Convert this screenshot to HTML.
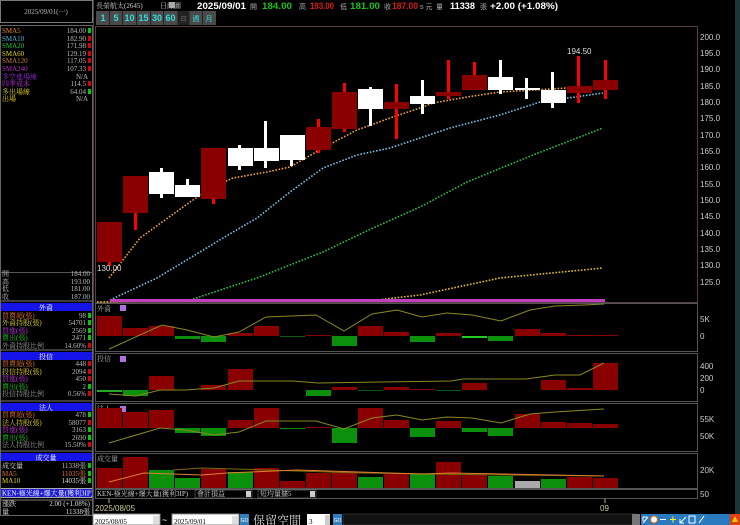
<!DOCTYPE html>
<html><head><meta charset="utf-8"><style>
html,body{margin:0;padding:0;background:#000;width:740px;height:525px;overflow:hidden}
svg{display:block}
.s{font-family:"Liberation Serif","Noto Serif CJK TC",serif;font-size:7px}
.b{font-family:"Liberation Sans","Noto Sans CJK TC",sans-serif}
</style></head><body>
<svg width="740" height="525" viewBox="0 0 740 525" xmlns="http://www.w3.org/2000/svg">
<rect width="740" height="525" fill="#000"/>
<!-- left panel -->
<rect x="0.5" y="0.5" width="92" height="22" fill="#000" stroke="#777"/>
<text x="46" y="14" class="s" fill="#bbb" text-anchor="middle" font-size="7.5">2025/09/01(一)</text>
<rect x="0.5" y="25.5" width="92" height="247" fill="none" stroke="#555"/>
<g class="s">
<text x="2" y="33" fill="#e08a2a">SMA5</text><text x="86" y="33" fill="#bbb" text-anchor="end">184.00</text><rect x="88" y="28" width="3" height="5" fill="#0c0"/>
<text x="2" y="41" fill="#4ab8d8">SMA10</text><text x="86" y="41" fill="#bbb" text-anchor="end">182.90</text><rect x="88" y="36" width="3" height="5" fill="#d00"/>
<text x="2" y="48" fill="#2cc02c">SMA20</text><text x="86" y="48" fill="#bbb" text-anchor="end">171.98</text><rect x="88" y="43" width="3" height="5" fill="#d00"/>
<text x="2" y="56" fill="#dcd020">SMA60</text><text x="86" y="56" fill="#bbb" text-anchor="end">129.19</text><rect x="88" y="51" width="3" height="5" fill="#d00"/>
<text x="2" y="63" fill="#c08040">SMA120</text><text x="86" y="63" fill="#bbb" text-anchor="end">117.05</text><rect x="88" y="58" width="3" height="5" fill="#d00"/>
<text x="2" y="71" fill="#b030c0">SMA240</text><text x="86" y="71" fill="#bbb" text-anchor="end">107.33</text><rect x="88" y="66" width="3" height="5" fill="#d00"/>
<text x="2" y="79" fill="#9030d0">多空進場線</text><text x="88" y="79" fill="#bbb" text-anchor="end">N/A</text>
<text x="2" y="86" fill="#c030e0">四季成本</text><text x="86" y="86" fill="#bbb" text-anchor="end">114.5</text><rect x="88" y="81" width="3" height="5" fill="#d00"/>
<text x="2" y="94" fill="#e0d020">多出場線</text><text x="86" y="94" fill="#bbb" text-anchor="end">64.04</text><rect x="88" y="89" width="3" height="5" fill="#0c0"/>
<text x="2" y="101" fill="#e0d020">出場</text><text x="88" y="101" fill="#bbb" text-anchor="end">N/A</text>

<text x="2" y="276" fill="#bbb">開</text><text x="90" y="276" fill="#bbb" text-anchor="end">184.00</text>
<text x="2" y="284" fill="#bbb">高</text><text x="90" y="284" fill="#bbb" text-anchor="end">193.00</text>
<text x="2" y="291" fill="#bbb">低</text><text x="90" y="291" fill="#bbb" text-anchor="end">181.00</text>
<text x="2" y="299" fill="#bbb">收</text><text x="90" y="299" fill="#bbb" text-anchor="end">187.00</text>

<rect x="1" y="303" width="91" height="8" fill="#1414e8"/><text x="46" y="310" fill="#fff" text-anchor="middle">外資</text>
<text x="2" y="318" fill="#e07030">買賣超(張)</text><text x="86" y="318" fill="#bbb" text-anchor="end">98</text><rect x="88" y="313" width="3" height="5" fill="#0c0"/>
<text x="2" y="325" fill="#e0d020">外資持股(張)</text><text x="86" y="325" fill="#bbb" text-anchor="end">54701</text><rect x="88" y="320" width="3" height="5" fill="#0c0"/>
<text x="2" y="333" fill="#c030e0">買進(張)</text><text x="86" y="333" fill="#bbb" text-anchor="end">2569</text><rect x="88" y="328" width="3" height="5" fill="#0c0"/>
<text x="2" y="340" fill="#20c020">賣出(張)</text><text x="86" y="340" fill="#bbb" text-anchor="end">2471</text><rect x="88" y="335" width="3" height="5" fill="#0c0"/>
<text x="2" y="348" fill="#999">外資持股比例</text><text x="86" y="348" fill="#bbb" text-anchor="end">14.60%</text><rect x="88" y="343" width="3" height="5" fill="#d00"/>

<rect x="1" y="352" width="91" height="8" fill="#1414e8"/><text x="46" y="359" fill="#fff" text-anchor="middle">投信</text>
<text x="2" y="366" fill="#e07030">買賣超(張)</text><text x="86" y="366" fill="#bbb" text-anchor="end">448</text><rect x="88" y="361" width="3" height="5" fill="#d00"/>
<text x="2" y="374" fill="#e0d020">投信持股(張)</text><text x="86" y="374" fill="#bbb" text-anchor="end">2094</text><rect x="88" y="369" width="3" height="5" fill="#d00"/>
<text x="2" y="381" fill="#c030e0">買進(張)</text><text x="86" y="381" fill="#bbb" text-anchor="end">450</text><rect x="88" y="376" width="3" height="5" fill="#d00"/>
<text x="2" y="389" fill="#20c020">賣出(張)</text><text x="86" y="389" fill="#bbb" text-anchor="end">2</text><rect x="88" y="384" width="3" height="5" fill="#0c0"/>
<text x="2" y="396" fill="#999">投信持股比例</text><text x="86" y="396" fill="#bbb" text-anchor="end">0.56%</text><rect x="88" y="391" width="3" height="5" fill="#d00"/>

<rect x="1" y="403" width="91" height="8" fill="#1414e8"/><text x="46" y="410" fill="#fff" text-anchor="middle">法人</text>
<text x="2" y="417" fill="#e07030">買賣超(張)</text><text x="86" y="417" fill="#bbb" text-anchor="end">478</text><rect x="88" y="412" width="3" height="5" fill="#0c0"/>
<text x="2" y="425" fill="#e0d020">法人持股(張)</text><text x="86" y="425" fill="#bbb" text-anchor="end">58077</text><rect x="88" y="420" width="3" height="5" fill="#d00"/>
<text x="2" y="432" fill="#c030e0">買進(張)</text><text x="86" y="432" fill="#bbb" text-anchor="end">3163</text><rect x="88" y="427" width="3" height="5" fill="#0c0"/>
<text x="2" y="440" fill="#20c020">賣出(張)</text><text x="86" y="440" fill="#bbb" text-anchor="end">2690</text><rect x="88" y="435" width="3" height="5" fill="#0c0"/>
<text x="2" y="447" fill="#999">法人持股比例</text><text x="86" y="447" fill="#bbb" text-anchor="end">15.50%</text><rect x="88" y="442" width="3" height="5" fill="#d00"/>

<rect x="1" y="453" width="91" height="8" fill="#1414e8"/><text x="46" y="460" fill="#fff" text-anchor="middle">成交量</text>
<text x="2" y="468" fill="#ddd">成交量</text><text x="86" y="468" fill="#bbb" text-anchor="end">11338張</text><rect x="88" y="463" width="3" height="5" fill="#0c0"/>
<text x="2" y="476" fill="#e07030">MA5</text><text x="86" y="476" fill="#e07030" text-anchor="end">11035張</text><rect x="88" y="471" width="3" height="5" fill="#0c0"/>
<text x="2" y="483" fill="#e0d020">MA10</text><text x="86" y="483" fill="#ddd" text-anchor="end">14035張</text><rect x="88" y="478" width="3" height="5" fill="#0c0"/>

<rect x="0.5" y="488.5" width="92" height="9" fill="#1a1ad0" stroke="#aaa"/>
<text x="2" y="495.5" fill="#fff">KEN-極光線+爆大量(獲利3IP)</text>
<text x="2" y="506" fill="#ddd">漲跌</text><text x="90" y="506" fill="#ddd" text-anchor="end">2.00 (+1.08%)</text>
<text x="2" y="514" fill="#ddd">量</text><text x="90" y="514" fill="#ddd" text-anchor="end">11338張</text>
</g>
<line x1="0.5" y1="301" x2="92.5" y2="301" stroke="#777"/>
<line x1="0.5" y1="350" x2="92.5" y2="350" stroke="#777"/>
<line x1="0.5" y1="401" x2="92.5" y2="401" stroke="#777"/>
<line x1="0.5" y1="451" x2="92.5" y2="451" stroke="#777"/>
<line x1="0.5" y1="500" x2="92.5" y2="500" stroke="#777"/>
<rect x="0.5" y="25.5" width="92" height="490" fill="none" stroke="#666"/>
<line x1="93.5" y1="0" x2="93.5" y2="525" stroke="#444"/>

<!-- header -->
<text x="96" y="8" class="s" fill="#ccc" font-size="7.5">長榮航太(2645)</text>
<text x="160" y="8" class="s" fill="#ccc" font-size="7.5">日線圖</text>
<rect x="169" y="2" width="6" height="6" fill="#aaa"/>
<g class="b" font-weight="bold" font-size="9.5">
<text x="197" y="9" fill="#fff" textLength="49" lengthAdjust="spacingAndGlyphs">2025/09/01</text>
<text x="250" y="9" fill="#aaa" font-size="7" font-weight="normal">開</text><text x="262" y="9" fill="#1bc01b" textLength="30" lengthAdjust="spacingAndGlyphs">184.00</text>
<text x="299" y="9" fill="#aaa" font-size="7" font-weight="normal">高</text><text x="310" y="9" fill="#e01818" textLength="24" lengthAdjust="spacingAndGlyphs">193.00</text>
<text x="340" y="9" fill="#aaa" font-size="7" font-weight="normal">低</text><text x="350" y="9" fill="#1bc01b" textLength="30" lengthAdjust="spacingAndGlyphs">181.00</text>
<text x="384" y="9" fill="#aaa" font-size="7" font-weight="normal">收</text><text x="392" y="9" fill="#e01818" textLength="26" lengthAdjust="spacingAndGlyphs">187.00</text>
<text x="420" y="9" fill="#aaa" font-size="7" font-weight="normal">s 元</text>
<text x="436" y="9" fill="#aaa" font-size="7" font-weight="normal">量</text><text x="450" y="9" fill="#fff" font-size="9" textLength="25" lengthAdjust="spacingAndGlyphs">11338</text>
<text x="480" y="9" fill="#aaa" font-size="7" font-weight="normal">張</text>
<text x="490" y="9" fill="#fff" font-size="9" textLength="68" lengthAdjust="spacingAndGlyphs">+2.00 (+1.08%)</text>
</g>
<g class="b" font-size="9" font-weight="bold" fill="#3dd">
<rect x="96" y="11" width="120" height="14" fill="#4a4a4a"/>
<rect x="177.5" y="11" width="12" height="14" fill="#222"/>
<g stroke="#222" stroke-width="1"><line x1="109.5" y1="11" x2="109.5" y2="25"/><line x1="122.5" y1="11" x2="122.5" y2="25"/><line x1="136.5" y1="11" x2="136.5" y2="25"/><line x1="150.5" y1="11" x2="150.5" y2="25"/><line x1="163.5" y1="11" x2="163.5" y2="25"/><line x1="202.5" y1="11" x2="202.5" y2="25"/></g>
<text x="103" y="21" text-anchor="middle">1</text><text x="116" y="21" text-anchor="middle">5</text><text x="129.5" y="21" text-anchor="middle">10</text><text x="143.5" y="21" text-anchor="middle">15</text><text x="157" y="21" text-anchor="middle">30</text><text x="170.5" y="21" text-anchor="middle">60</text>
<text x="183.5" y="21" text-anchor="middle" fill="#777" font-size="6" font-weight="normal">日</text>
<text x="196" y="21" text-anchor="middle" font-size="7" font-weight="normal">週</text>
<text x="209" y="21" text-anchor="middle" font-size="7" font-weight="normal">月</text>
</g>
<rect x="735" y="0" width="5" height="525" fill="#1d3535"/>

<!-- main chart -->
<rect x="95.5" y="26.5" width="602" height="276" fill="none" stroke="#5a3a44"/>
<g class="b" font-size="8" fill="#ccc">
<text x="700" y="40">200.0</text><text x="700" y="56">195.0</text><text x="700" y="72">190.0</text><text x="700" y="89">185.0</text><text x="700" y="105">180.0</text><text x="700" y="121">175.0</text><text x="700" y="138">170.0</text><text x="700" y="154">165.0</text><text x="700" y="170">160.0</text><text x="700" y="187">155.0</text><text x="700" y="203">150.0</text><text x="700" y="219">145.0</text><text x="700" y="236">140.0</text><text x="700" y="252">135.0</text><text x="700" y="268">130.0</text><text x="700" y="285">125.0</text>
</g>
<g fill="none" stroke-width="1.6" stroke-dasharray="1.6 1.6">
<polyline stroke="#e0c020" points="97,302 200,300 300,300 377,300 420,295 500,278 603,268"/>
<polyline stroke="#2cc040" points="190,300 257,278 323,252 373,228 420,207 467,182 533,155 603,128"/>
<polyline stroke="#70c0e0" points="110,300 157,278 190,258 223,238 257,218 290,192 323,168 357,155 390,148 420,138 450,128 500,115 540,102 603,93"/>
<polyline stroke="#f0a040" points="109,278 140,238 190,202 213,187 233,178 267,172 290,167 323,148 357,130 390,118 420,108 433,103 467,97 500,92 533,90 567,88 603,88"/>
</g>
<rect x="110" y="299" width="495" height="3" fill="#c040c0"/>
<g>
<rect x="108" y="222" width="3" height="44" fill="#f00"/><rect x="97" y="222" width="25" height="40" fill="#8a0000"/>
<rect x="134" y="176" width="3" height="54" fill="#f00"/><rect x="123" y="176" width="25" height="37" fill="#8a0000"/>
<rect x="160" y="168" width="3" height="30" fill="#fff"/><rect x="149" y="172" width="25" height="22" fill="#fff"/>
<rect x="186" y="179" width="3" height="18" fill="#fff"/><rect x="175" y="185" width="25" height="12" fill="#fff"/>
<rect x="212" y="148" width="3" height="56" fill="#f00"/><rect x="201" y="148" width="25" height="51" fill="#8a0000"/>
<rect x="238" y="145" width="3" height="25" fill="#fff"/><rect x="228" y="148" width="25" height="18" fill="#fff"/>
<rect x="264" y="121" width="3" height="47" fill="#fff"/><rect x="254" y="148" width="25" height="13" fill="#fff"/>
<rect x="290" y="135" width="3" height="31" fill="#fff"/><rect x="280" y="135" width="25" height="25" fill="#fff"/>
<rect x="317" y="119" width="3" height="34" fill="#f00"/><rect x="306" y="127" width="25" height="23" fill="#8a0000"/>
<rect x="343" y="83" width="3" height="49" fill="#f00"/><rect x="332" y="92" width="25" height="37" fill="#8a0000"/>
<rect x="369" y="87" width="3" height="39" fill="#fff"/><rect x="358" y="89" width="25" height="20" fill="#fff"/>
<rect x="395" y="84" width="3" height="55" fill="#f00"/><rect x="384" y="102" width="25" height="7" fill="#8a0000"/>
<rect x="421" y="80" width="3" height="34" fill="#fff"/><rect x="410" y="96" width="25" height="8" fill="#fff"/>
<rect x="447" y="60" width="3" height="39" fill="#f00"/><rect x="436" y="92" width="25" height="4" fill="#8a0000"/>
<rect x="473" y="62" width="3" height="28" fill="#f00"/><rect x="462" y="75" width="25" height="15" fill="#8a0000"/>
<rect x="499" y="60" width="3" height="34" fill="#fff"/><rect x="488" y="77" width="25" height="13" fill="#fff"/>
<rect x="525" y="78" width="3" height="21" fill="#fff"/><rect x="515" y="88" width="25" height="2" fill="#fff"/>
<rect x="551" y="72" width="3" height="36" fill="#fff"/><rect x="541" y="90" width="25" height="13" fill="#fff"/>
<rect x="577" y="56" width="3" height="47" fill="#f00"/><rect x="567" y="86" width="25" height="7" fill="#8a0000"/>
<rect x="604" y="60" width="3" height="39" fill="#f00"/><rect x="593" y="80" width="25" height="10" fill="#8a0000"/>
</g>
<text x="97" y="271" class="b" font-size="8" fill="#ddd">130.00</text>
<text x="567" y="54" class="b" font-size="8" fill="#ddd">194.50</text>

<!-- panel 外資 -->
<rect x="95.5" y="303.5" width="602" height="48" fill="none" stroke="#555"/>
<text x="97" y="311" class="s" fill="#aaa" font-size="6">外資</text><rect x="120" y="305" width="6" height="6" fill="#b070e0"/>
<g fill="#8a0000"><rect x="97" y="316" width="25" height="20"/><rect x="123" y="328" width="25" height="8"/><rect x="149" y="326" width="25" height="10"/><rect x="228" y="333" width="25" height="3"/><rect x="254" y="326" width="25" height="10"/><rect x="306" y="335" width="25" height="1"/><rect x="358" y="326" width="25" height="10"/><rect x="384" y="332" width="25" height="4"/><rect x="436" y="333" width="25" height="3"/><rect x="515" y="329" width="25" height="7"/><rect x="541" y="333" width="25" height="3"/><rect x="567" y="335" width="25" height="1"/><rect x="593" y="335" width="25" height="1"/></g>
<g fill="#0a900a"><rect x="175" y="336" width="25" height="3"/><rect x="201" y="336" width="25" height="6"/><rect x="280" y="336" width="25" height="1" fill="#0a5a0a"/><rect x="332" y="336" width="25" height="10"/><rect x="410" y="336" width="25" height="6"/><rect x="462" y="336" width="25" height="2" fill="#2c2"/><rect x="488" y="336" width="25" height="5"/></g>
<polyline fill="none" stroke="#8a8a20" stroke-width="1" points="109,349 162,325 187,330 214,337 239,332 266,317 316,315 344,331 372,314 397,310 422,317 447,313 472,315 501,321 530,310 555,306 584,305 604,304"/>
<g class="b" font-size="8" fill="#ccc"><text x="700" y="322">5K</text><text x="700" y="339">0</text></g>

<!-- panel 投信 -->
<rect x="95.5" y="353.5" width="602" height="48" fill="none" stroke="#555"/>
<text x="97" y="361" class="s" fill="#aaa" font-size="6">投信</text><rect x="120" y="356" width="6" height="6" fill="#b070e0"/>
<g fill="#8a0000"><rect x="149" y="376" width="25" height="14"/><rect x="201" y="385" width="25" height="5"/><rect x="228" y="369" width="25" height="21"/><rect x="332" y="387" width="25" height="3"/><rect x="384" y="387" width="25" height="3"/><rect x="410" y="389" width="25" height="1"/><rect x="462" y="383" width="25" height="7"/><rect x="541" y="380" width="25" height="10"/><rect x="567" y="388" width="25" height="2"/><rect x="593" y="363" width="25" height="27"/></g>
<g fill="#0a900a"><rect x="97" y="390" width="25" height="2" fill="#2a2"/><rect x="123" y="390" width="25" height="6"/><rect x="306" y="390" width="25" height="6"/><rect x="358" y="390" width="25" height="1" fill="#0a5a0a"/><rect x="436" y="390" width="25" height="1" fill="#0a5a0a"/></g>
<polyline fill="none" stroke="#8a8a20" stroke-width="1" points="109,394 136,396 160,390 185,390 214,388 239,381 293,381 318,383 380,382 451,381 463,379 526,379 555,375 580,375 604,363"/>
<g class="b" font-size="8" fill="#ccc"><text x="700" y="369">400</text><text x="700" y="381">200</text><text x="700" y="393">0</text></g>

<!-- panel 法人 -->
<rect x="95.5" y="403.5" width="602" height="48" fill="none" stroke="#555"/>
<text x="97" y="411" class="s" fill="#aaa" font-size="6">法人</text><rect x="120" y="406" width="6" height="6" fill="#b070e0"/>
<g fill="#8a0000"><rect x="97" y="408" width="25" height="20"/><rect x="123" y="412" width="25" height="16"/><rect x="149" y="410" width="25" height="18"/><rect x="228" y="420" width="25" height="8"/><rect x="254" y="408" width="25" height="20"/><rect x="306" y="427" width="25" height="1"/><rect x="358" y="408" width="25" height="20"/><rect x="384" y="420" width="25" height="8"/><rect x="436" y="421" width="25" height="7"/><rect x="515" y="414" width="25" height="14"/><rect x="541" y="422" width="25" height="6"/><rect x="567" y="423" width="25" height="5"/><rect x="593" y="424" width="25" height="4"/></g>
<g fill="#0a900a"><rect x="175" y="428" width="25" height="5"/><rect x="201" y="428" width="25" height="8"/><rect x="280" y="428" width="25" height="1"/><rect x="332" y="428" width="25" height="15"/><rect x="410" y="428" width="25" height="9"/><rect x="462" y="428" width="25" height="4"/><rect x="488" y="428" width="25" height="8"/></g>
<polyline fill="none" stroke="#8a8a20" stroke-width="1" points="109,443 160,428 185,430 214,435 239,432 266,421 316,421 344,429 372,418 397,415 422,420 447,417 472,418 501,423 530,414 555,412 604,409"/>
<g class="b" font-size="8" fill="#ccc"><text x="700" y="422">55K</text><text x="700" y="439">50K</text></g>

<!-- panel 成交量 -->
<rect x="95.5" y="453.5" width="602" height="35" fill="none" stroke="#555"/>
<text x="97" y="461" class="s" fill="#aaa" font-size="6">成交量</text>
<g fill="#8a0000"><rect x="97" y="468" width="25" height="20"/><rect x="123" y="457" width="25" height="31"/><rect x="201" y="469" width="25" height="19"/><rect x="254" y="468" width="25" height="20"/><rect x="280" y="481" width="25" height="7"/><rect x="306" y="473" width="25" height="15"/><rect x="332" y="472" width="25" height="16"/><rect x="384" y="474" width="25" height="14"/><rect x="436" y="462" width="25" height="26"/><rect x="462" y="475" width="25" height="13"/><rect x="567" y="477" width="25" height="11"/><rect x="593" y="478" width="25" height="10"/></g>
<g fill="#0a900a"><rect x="149" y="470" width="25" height="18"/><rect x="175" y="478" width="25" height="10"/><rect x="228" y="472" width="25" height="16"/><rect x="358" y="477" width="25" height="11"/><rect x="410" y="474" width="25" height="14"/><rect x="488" y="476" width="25" height="12"/><rect x="541" y="479" width="25" height="9"/></g>
<rect x="515" y="481" width="25" height="7" fill="#aaa"/>
<polyline fill="none" stroke="#7a6a10" stroke-width="1" points="173,470 202,468 297,471 360,473 505,475 604,476"/>
<polyline fill="none" stroke="#e08030" stroke-width="1" points="109,482 144,473 202,475 227,473 297,470 422,474 451,473 604,476"/>
<text x="700" y="473" class="b" font-size="8" fill="#ccc">20K</text>

<!-- KEN row -->
<rect x="95.5" y="489.5" width="602" height="9" fill="#000" stroke="#555"/>
<text x="97" y="496" class="s" fill="#ccc" font-size="6">KEN-極光線+爆大量(獲利3IP)</text>
<rect x="195" y="490" width="57" height="8" fill="#000" stroke="#888" stroke-width="0.5"/><text x="197" y="496" class="s" fill="#ccc" font-size="6">會計損益</text><rect x="246" y="491" width="5" height="6" fill="#ccc"/>
<rect x="258" y="490" width="58" height="8" fill="#000" stroke="#888" stroke-width="0.5"/><text x="260" y="496" class="s" fill="#ccc" font-size="6">短均量擴5</text><rect x="310" y="491" width="5" height="6" fill="#ccc"/>
<text x="700" y="497" class="b" font-size="8" fill="#ccc">50</text>
<line x1="109" y1="499" x2="109" y2="503" stroke="#bb6"/>
<line x1="605" y1="499" x2="605" y2="503" stroke="#bb6"/>
<text x="95" y="511" class="b" font-size="8" fill="#cc9">2025/08/05</text>
<text x="600" y="511" class="b" font-size="8" fill="#cc9">09</text>
<!-- bottom controls -->
<rect x="93" y="514" width="67" height="11" fill="#fff" stroke="#888"/>
<text x="95" y="524" class="s" fill="#000" font-size="10">2025/08/05</text><rect x="153" y="516" width="6" height="8" fill="#ddd"/>
<text x="162" y="523" class="b" font-size="9" fill="#fff">~</text>
<rect x="172" y="514" width="67" height="11" fill="#fff" stroke="#888"/>
<text x="174" y="524" class="s" fill="#000" font-size="10">2025/09/01</text><rect x="232" y="516" width="6" height="8" fill="#ddd"/>
<rect x="240" y="514" width="9" height="11" fill="#3080c0"/><text x="244.5" y="522" class="b" font-size="5" fill="#fff" text-anchor="middle">GO</text>
<text x="253" y="525" font-family="'Liberation Serif','Noto Serif CJK TC',serif" fill="#ddd" font-size="12.5" textLength="48" lengthAdjust="spacingAndGlyphs">保留空間</text>
<rect x="307" y="514" width="23" height="11" fill="#fff"/><text x="309" y="524" class="s" fill="#000" font-size="10">3</text><rect x="325" y="515" width="5" height="10" fill="#ccc"/>
<rect x="333" y="514" width="9" height="11" fill="#3080c0"/><text x="337.5" y="522" class="b" font-size="5" fill="#fff" text-anchor="middle">GO</text>
<rect x="343" y="514" width="293" height="11" fill="#111" stroke="#555" stroke-width="0.5"/>
<rect x="632" y="514" width="8" height="11" fill="#777"/>
<rect x="641" y="514" width="94" height="11" fill="#2a7ac0"/>
<g stroke="#fff" stroke-width="1" fill="none"><path d="M643 523l5-6M643 517h4M643 517v4"/><circle cx="654" cy="519.5" r="3.5" fill="#fff" stroke="#e60"/><path d="M660 519.5h6"/><path d="M670 519.5h6M673 516.5v6" stroke="#ff0"/><path d="M680 523l6-6M680 519v4h4"/><path d="M689 516h6v7h-6z"/><path d="M699 523l5-7"/></g>
<rect x="730" y="514" width="10" height="11" fill="#e04010"/><path d="M735 516l3 6h-6z" fill="#fc0"/>
</svg>
</body></html>
